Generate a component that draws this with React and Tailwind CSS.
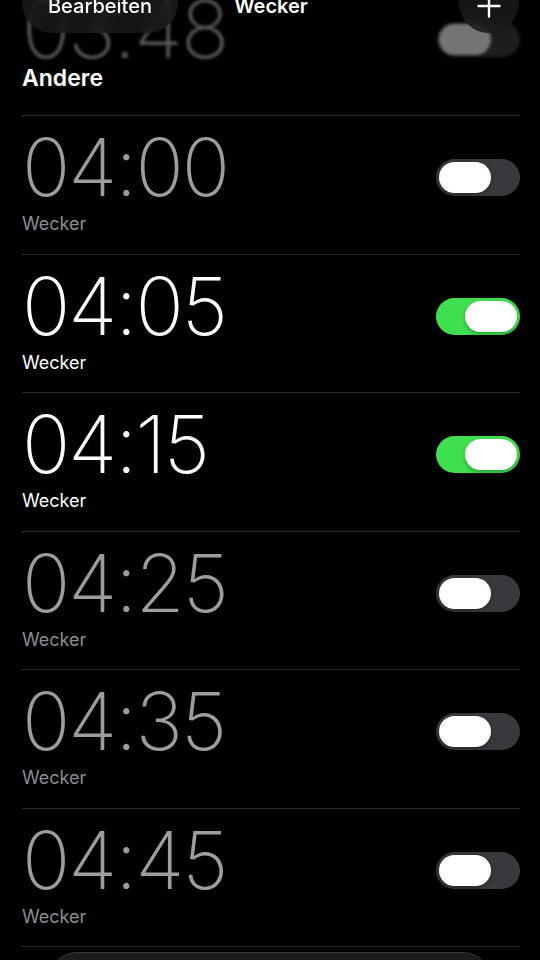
import React from 'react';

const alarms = [
  { time: '04:00', on: false },
  { time: '04:05', on: true },
  { time: '04:15', on: true },
  { time: '04:25', on: false },
  { time: '04:35', on: false },
  { time: '04:45', on: false },
];

// iOS-style switch
const Toggle = ({ on }) => (
  <div
    className={
      on
        ? 'w-[84px] h-[37px] rounded-full bg-[#3fe04f] p-[3px] flex justify-end'
        : 'w-[84px] h-[37px] rounded-full bg-[#39393d] p-[3px] flex justify-start'
    }
  >
    <div className="w-[52px] h-[31px] rounded-full bg-white shadow-[0_2px_4px_rgba(0,0,0,0.3)]" />
  </div>
);

const AlarmRow = ({ time, on }) => (
  <div className="h-[138.5px] ml-[22px] mr-[20px] border-b border-[#2a2a2c] flex justify-between">
    <div className="pt-[11px]">
      <div
        className={
          on
            ? 'text-[80px] leading-[80px] font-extralight tracking-[-2px] text-white'
            : 'text-[80px] leading-[80px] font-extralight tracking-[-2px] text-[#9d9d9f]'
        }
      >
        {time}
      </div>
      <div
        className={
          on
            ? 'mt-[5px] text-[18px] leading-[24px] text-white'
            : 'mt-[5px] text-[18px] leading-[24px] text-[#8d8d90]'
        }
      >
        Wecker
      </div>
    </div>
    <div className="pt-[43px]">
      <Toggle on={on} />
    </div>
  </div>
);

export default function App() {
  return (
    <div
      className="w-[540px] h-[960px] bg-black overflow-hidden"
      style={{ fontFamily: 'Inter, "Noto Sans", sans-serif' }}
    >
      {/* Kopfbereich */}
      <div className="relative h-[116px] ml-[22px] mr-[20px] border-b border-[#2a2a2c]">
        {/* gescrollte Zeile 03:48, verblasst unter der Leiste */}
        <div className="absolute inset-x-0 top-[-11px] flex justify-between blur-[1.4px] opacity-50">
          <div>
            <div className="text-[80px] leading-[80px] font-extralight tracking-[-2px] text-[#b0b0b0]">03:48</div>
            <div className="mt-[1px] text-[18px] leading-[20px] text-[#555]">Wecker</div>
          </div>
          <div className="pt-[33px]">
            <div className="w-[83px] h-[35px] rounded-full bg-[#3a3a3c] p-[2px]">
              <div className="w-[52px] h-[31px] rounded-full bg-[#e8e8e8]" />
            </div>
          </div>
        </div>

        <div className="relative pt-[64px] text-white text-[23px] leading-[28px] font-semibold">
          Andere
        </div>

        {/* Navigationsleiste darüber */}
        <div className="absolute inset-x-0 top-[-28px] grid grid-cols-[1fr_auto_1fr] items-end">
          <div className="justify-self-start h-[61px] w-[156px] rounded-full bg-[#1c1c1e]/70 backdrop-blur-sm flex items-end justify-center pb-[15px] text-white text-[20px] leading-[24px] font-medium">
            Bearbeiten
          </div>
          <div className="pb-[15px] text-white text-[20px] leading-[24px] font-semibold">
            Wecker
          </div>
          <div className="justify-self-end w-[60px] h-[60px] mr-[1px] rounded-full bg-[#1c1c1e]/80 backdrop-blur-sm flex items-end justify-center pb-[15px]">
            <svg width="24" height="24" viewBox="0 0 24 24">
              <path d="M12 1.5v21M1.5 12h21" stroke="white" strokeWidth="2.4" strokeLinecap="round" />
            </svg>
          </div>
        </div>
      </div>

      {alarms.map((a) => (
        <AlarmRow key={a.time} time={a.time} on={a.on} />
      ))}

      {/* angeschnittene Tab-Leiste */}
      <div className="mx-[48px] mt-[5px] h-[60px] rounded-full bg-[#1c1c1e] border-t border-[#3a3a3c]" />
    </div>
  );
}
